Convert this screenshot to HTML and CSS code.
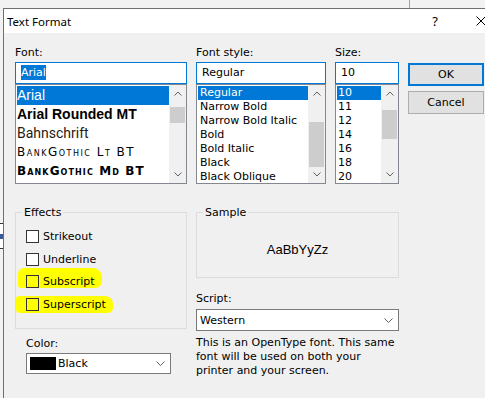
FILE: index.html
```html
<!DOCTYPE html>
<html lang="en">

<head>
    <meta charset="UTF-8">
    <title>Text Format</title>
    <link rel="stylesheet" href="styles.css">
</head>

<body>

    <div class="desk">
        <div class="behind_line"></div>
        <div class="behind_box"><i class="behind_mark"></i></div>

        <div class="dialog">
            <div class="title_bar">
                <span class="title">Text Format</span>
                <span class="cap_btn help">?</span>
                <span class="cap_btn close">
                    <svg width="10" height="10" viewBox="0 0 10 10"><path d="M0.5 0.5 L9.5 9.5 M9.5 0.5 L0.5 9.5" stroke="#000" stroke-width="1" fill="none"/></svg>
                </span>
            </div>

            <div class="body">
                <div class="top_row">
                    <!-- font -->
                    <div class="col col_font">
                        <div class="lbl">Font:</div>
                        <div class="input"><span class="sel_text">Arial</span></div>
                        <div class="list">
                            <ul class="items font_items">
                                <li class="selected f_arial">Arial</li>
                                <li class="f_rounded">Arial Rounded MT</li>
                                <li class="f_bahn">Bahnschrift</li>
                                <li class="f_bank">BankGothic Lt BT</li>
                                <li class="f_bank f_bank_md">BankGothic Md BT</li>
                            </ul>
                            <div class="scrollbar">
                                <div class="arrow"><svg width="8" height="5" viewBox="0 0 8 5"><polyline points="0.5,4.5 4,1 7.5,4.5" fill="none" stroke="#606060"/></svg></div>
                                <div class="track"><div class="thumb thumb_font"></div></div>
                                <div class="arrow"><svg width="8" height="5" viewBox="0 0 8 5"><polyline points="0.5,0.5 4,4 7.5,0.5" fill="none" stroke="#606060"/></svg></div>
                            </div>
                        </div>
                    </div>

                    <!-- font style -->
                    <div class="col col_style">
                        <div class="lbl">Font style:</div>
                        <div class="input">Regular</div>
                        <div class="list">
                            <ul class="items small_items">
                                <li class="selected">Regular</li>
                                <li>Narrow Bold</li>
                                <li>Narrow Bold Italic</li>
                                <li>Bold</li>
                                <li>Bold Italic</li>
                                <li>Black</li>
                                <li>Black Oblique</li>
                            </ul>
                            <div class="scrollbar">
                                <div class="arrow"><svg width="8" height="5" viewBox="0 0 8 5"><polyline points="0.5,4.5 4,1 7.5,4.5" fill="none" stroke="#606060"/></svg></div>
                                <div class="track"><div class="thumb thumb_style"></div></div>
                                <div class="arrow"><svg width="8" height="5" viewBox="0 0 8 5"><polyline points="0.5,0.5 4,4 7.5,0.5" fill="none" stroke="#606060"/></svg></div>
                            </div>
                        </div>
                    </div>

                    <!-- size -->
                    <div class="col col_size">
                        <div class="lbl">Size:</div>
                        <div class="input">10</div>
                        <div class="list">
                            <ul class="items small_items size_items">
                                <li class="selected">10</li>
                                <li>11</li>
                                <li>12</li>
                                <li>14</li>
                                <li>16</li>
                                <li>18</li>
                                <li>20</li>
                            </ul>
                            <div class="scrollbar">
                                <div class="arrow"><svg width="8" height="5" viewBox="0 0 8 5"><polyline points="0.5,4.5 4,1 7.5,4.5" fill="none" stroke="#606060"/></svg></div>
                                <div class="track"><div class="thumb thumb_size"></div></div>
                                <div class="arrow"><svg width="8" height="5" viewBox="0 0 8 5"><polyline points="0.5,0.5 4,4 7.5,0.5" fill="none" stroke="#606060"/></svg></div>
                            </div>
                        </div>
                    </div>

                    <div class="buttons">
                        <div class="btn btn_default">OK</div>
                        <div class="btn">Cancel</div>
                    </div>
                </div>

                <div class="bottom_row">
                    <div class="left_col">
                        <fieldset class="group effects">
                            <legend>Effects</legend>
                            <div class="check"><span class="box"></span>Strikeout</div>
                            <div class="check"><span class="box"></span>Underline</div>
                            <div class="check marked"><i class="mark mark_sub"></i><span class="box"></span>Subscript</div>
                            <div class="check marked"><i class="mark mark_sup"></i><span class="box"></span>Superscript</div>
                        </fieldset>

                        <div class="color_block">
                            <div class="lbl">Color:</div>
                            <div class="combo combo_color">
                                <span class="swatch"></span>
                                <span class="combo_text">Black</span>
                                <svg width="9" height="5" viewBox="0 0 9 5"><polyline points="0.5,0.5 4.5,4.5 8.5,0.5" fill="none" stroke="#606060"/></svg>
                            </div>
                        </div>
                    </div>

                    <div class="right_col">
                        <fieldset class="group sample">
                            <legend>Sample</legend>
                            <div class="sample_text">AaBbYyZz</div>
                        </fieldset>

                        <div class="lbl lbl_script">Script:</div>
                        <div class="combo combo_script">
                            <span class="combo_text">Western</span>
                            <svg width="9" height="5" viewBox="0 0 9 5"><polyline points="0.5,0.5 4.5,4.5 8.5,0.5" fill="none" stroke="#606060"/></svg>
                        </div>

                        <p class="desc">This is an OpenType font. This same<br>font will be used on both your<br>printer and your screen.</p>
                    </div>
                </div>
            </div>
        </div>
    </div>

</body>

</html>
```

FILE: styles.css
```css
* {
    margin: 0;
    padding: 0;
    box-sizing: border-box;
}

body {
    background: #f0f0f0;
    font-family: "DejaVu Sans", sans-serif;
    font-size: 11px;
    color: #000;
    overflow: hidden;
}

.desk {
    position: relative;
    width: 485px;
    height: 398px;
    background: #f2f2f2;
    overflow: hidden;
}

/* bits of the window behind the dialog */
.behind_line {
    position: absolute;
    left: 409px;
    top: 0;
    width: 1px;
    height: 8px;
    background: #a0a0a0;
}

.behind_box {
    position: absolute;
    left: -12px;
    top: 223px;
    width: 16px;
    height: 26px;
    border: 1px solid #333;
    background: #fff;
}

.behind_mark {
    position: absolute;
    right: 0;
    top: 10px;
    width: 3px;
    height: 5px;
    background: #3a5a9a;
}

.dialog {
    position: absolute;
    left: 3px;
    top: 8px;
    width: 502px;
    height: 400px;
    border: 1px solid #6f6f6f;
    background: #f0f0f0;
}

.title_bar {
    height: 24px;
    background: #fff;
    display: flex;
    align-items: center;
}

.title {
    flex: 1;
    padding-left: 3px;
    font-family: "Noto Sans", sans-serif;
    font-size: 11.5px;
}

.cap_btn {
    width: 46px;
    height: 24px;
    display: flex;
    align-items: center;
    justify-content: center;
}

.help {
    font-family: "Noto Sans", sans-serif;
    font-size: 13px;
}

.body {
    padding: 13px 0 0 11px;
}

.top_row {
    display: flex;
    gap: 9px;
}

.col_font {
    width: 172px;
}

.col_style {
    width: 130px;
}

.col_size {
    width: 64px;
}

.lbl {
    height: 13px;
    line-height: 13px;
    margin-bottom: 3px;
}

.input {
    height: 22px;
    border: 1px solid #0078d7;
    background: #fff;
    padding-left: 5px;
    line-height: 20px;
    white-space: nowrap;
}

.sel_text {
    background: #0078d7;
    color: #fff;
    padding: 1px 0;
}

.list {
    height: 100px;
    border: 1px solid #828790;
    background: #fff;
    display: flex;
    overflow: hidden;
}

.items {
    flex: 1;
    list-style: none;
    padding: 1px 0 0 0;
    white-space: nowrap;
    overflow: hidden;
}

.items li {
    margin-left: 1px;
}

.items .selected {
    background: #0078d7;
    color: #fff;
}

.font_items li {
    height: 19px;
    line-height: 19px;
}

.f_arial {
    font-family: "Liberation Sans", sans-serif;
    font-size: 14px;
}

.f_rounded {
    font-family: "Liberation Sans", sans-serif;
    font-size: 14px;
    font-weight: bold;
}

.f_bahn {
    font-family: Roboto, sans-serif;
    font-size: 14px;
    color: #2a1a10;
}

.f_bank {
    font-family: "DejaVu Sans", sans-serif;
    font-size: 12px;
    font-variant: small-caps;
    letter-spacing: 1.5px;
}

.f_bank_md {
    font-weight: bold;
    letter-spacing: 1.1px;
}

.small_items li {
    height: 14px;
    line-height: 14px;
    padding-left: 2px;
}

.size_items li {
    padding-left: 1px;
}

.scrollbar {
    width: 17px;
    background: #f0f0f0;
    display: flex;
    flex-direction: column;
}

.arrow {
    height: 17px;
    display: flex;
    align-items: center;
    justify-content: center;
}

.track {
    flex: 1;
    padding: 0 1px;
}

.thumb {
    background: #cdcdcd;
}

.thumb_font {
    margin-top: 5px;
    height: 16px;
}

.thumb_style {
    margin-top: 20px;
    height: 45px;
}

.thumb_size {
    margin-top: 8px;
    height: 29px;
}

.buttons {
    width: 76px;
    padding-top: 17px;
}

.btn {
    height: 23px;
    border: 1px solid #adadad;
    background: #e1e1e1;
    text-align: center;
    line-height: 21px;
    margin-bottom: 5px;
}

.btn_default {
    border: 2px solid #0078d7;
    line-height: 19px;
}

.bottom_row {
    display: flex;
    gap: 9px;
    margin-top: 22px;
}

.left_col {
    width: 172px;
}

.right_col {
    width: 203px;
}

.group {
    border: 1px solid #dcdcdc;
    min-width: 0;
}

.group legend {
    margin-left: 6px;
    padding: 0 2px;
    line-height: 13px;
}

.effects {
    height: 123px;
    padding-top: 6px;
}

.check {
    position: relative;
    z-index: 0;
    height: 22.7px;
    display: flex;
    align-items: center;
    padding-left: 10px;
}

.box {
    width: 13px;
    height: 13px;
    border: 1px solid #333;
    background: #fff;
    margin-right: 4px;
}

.marked .box {
    background: transparent;
}

.mark {
    position: absolute;
    z-index: -1;
    background: #ffff00;
}

.mark_sub {
    left: 2px;
    top: -2px;
    width: 84px;
    height: 20px;
    border-radius: 6px 9px 7px 3px;
}

.mark_sup {
    left: 0;
    top: 3px;
    width: 97px;
    height: 17px;
    border-radius: 3px 8px 5px 4px;
}

.color_block {
    margin-top: 8px;
    padding-left: 11px;
}

.combo {
    border: 1px solid #7a7a7a;
    background: #fff;
    display: flex;
    align-items: center;
    padding: 0 5px 0 3px;
}

.combo_text {
    flex: 1;
}

.combo_color {
    width: 145px;
    height: 21px;
}

.swatch {
    width: 26px;
    height: 13px;
    background: #000;
    margin-right: 2px;
}

.sample {
    height: 72px;
    display: flex;
    align-items: center;
    justify-content: center;
}

.sample_text {
    font-family: "Liberation Sans", sans-serif;
    font-size: 13px;
    text-align: center;
    padding-top: 3px;
}

.lbl_script {
    margin-top: 14px;
    margin-bottom: 4px;
}

.combo_script {
    height: 22px;
}

.desc {
    margin-top: 5px;
    line-height: 14px;
}
```
